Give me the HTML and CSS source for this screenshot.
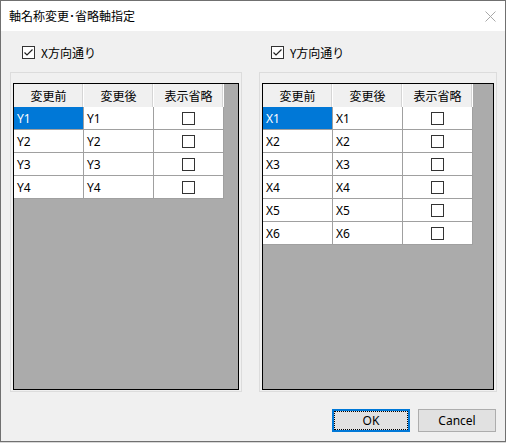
FILE: index.html
```html
<!DOCTYPE html>
<html lang="ja">
<head>
<meta charset="utf-8">
<title>軸名称変更･省略軸指定</title>
<link rel="stylesheet" href="styles.css">
</head>
<body>
<div class="window">
  <div class="titlebar">
    <span class="title">軸名称変更･省略軸指定</span>
    <svg class="close" width="11" height="11" viewBox="0 0 11 11"><path d="M0.5 0.5 L10.5 10.5 M10.5 0.5 L0.5 10.5" stroke="#a8a8a8" stroke-width="1" fill="none"/></svg>
  </div>
  <div class="body">
    <div class="cols checks">
      <label class="check">
        <svg class="cb" width="13" height="13" viewBox="0 0 13 13"><rect x="0.5" y="0.5" width="12" height="12" fill="#fff" stroke="#333"/><path d="M2.5 6.5 L5 9 L10.5 3.5" stroke="#222" stroke-width="1.2" fill="none"/></svg>
        <span>X方向通り</span>
      </label>
      <label class="check">
        <svg class="cb" width="13" height="13" viewBox="0 0 13 13"><rect x="0.5" y="0.5" width="12" height="12" fill="#fff" stroke="#333"/><path d="M2.5 6.5 L5 9 L10.5 3.5" stroke="#222" stroke-width="1.2" fill="none"/></svg>
        <span>Y方向通り</span>
      </label>
    </div>
    <div class="cols panels">
      <div class="panel">
        <div class="grid">
          <div class="table">
            <div class="hd">変更前</div><div class="hd">変更後</div><div class="hd">表示省略</div>
            <div class="cell sel">Y1</div><div class="cell">Y1</div><div class="cell cbc"><span class="box"></span></div>
            <div class="cell">Y2</div><div class="cell">Y2</div><div class="cell cbc"><span class="box"></span></div>
            <div class="cell">Y3</div><div class="cell">Y3</div><div class="cell cbc"><span class="box"></span></div>
            <div class="cell">Y4</div><div class="cell">Y4</div><div class="cell cbc"><span class="box"></span></div>
          </div>
        </div>
      </div>
      <div class="panel">
        <div class="grid">
          <div class="table">
            <div class="hd">変更前</div><div class="hd">変更後</div><div class="hd">表示省略</div>
            <div class="cell sel">X1</div><div class="cell">X1</div><div class="cell cbc"><span class="box"></span></div>
            <div class="cell">X2</div><div class="cell">X2</div><div class="cell cbc"><span class="box"></span></div>
            <div class="cell">X3</div><div class="cell">X3</div><div class="cell cbc"><span class="box"></span></div>
            <div class="cell">X4</div><div class="cell">X4</div><div class="cell cbc"><span class="box"></span></div>
            <div class="cell">X5</div><div class="cell">X5</div><div class="cell cbc"><span class="box"></span></div>
            <div class="cell">X6</div><div class="cell">X6</div><div class="cell cbc"><span class="box"></span></div>
          </div>
        </div>
      </div>
    </div>
    <div class="buttons">
      <button class="btn ok">OK</button>
      <button class="btn">Cancel</button>
    </div>
  </div>
</div>
</body>
</html>
```
FILE: styles.css
```css
html, body {
  margin: 0;
  padding: 0;
  background: #d8d8d8;
}
body {
  font-family: "Noto Sans", "Noto Sans CJK JP", sans-serif;
  font-size: 12px;
  color: #000;
}
.window {
  box-sizing: border-box;
  width: 506px;
  height: 442px;
  border: 1px solid #707070;
  display: flex;
  flex-direction: column;
}
.titlebar {
  height: 30px;
  background: #fff;
  display: flex;
  align-items: center;
  padding-left: 8px;
  padding-right: 9px;
}
.title {
  font-family: "Noto Sans CJK JP", sans-serif;
  font-size: 12px;
  line-height: 14px;
}
.close {
  margin-left: auto;
  margin-top: 1px;
}
.body {
  flex: 1;
  background: #f0f0f0;
  padding: 15px 8px 0 9px;
}
.cols {
  display: grid;
  grid-template-columns: 232px 238px;
  column-gap: 17px;
}
.checks {
  height: 13px;
}
.check {
  display: flex;
  align-items: center;
  margin-left: 12px;
  height: 13px;
}
.check .cb {
  display: block;
  flex: none;
}
.check span {
  margin-left: 6px;
  font-family: "Noto Sans CJK JP", sans-serif;
  line-height: 13px;
}
.panels {
  margin-top: 13px;
  height: 320px;
}
.panel {
  box-sizing: border-box;
  border: 1px solid #dcdcdc;
  padding: 10px 2px 1px 2px;
  display: flex;
}
.grid {
  flex: 1;
  border: 1px solid #000;
  background: #ababab;
}
.table {
  display: grid;
  grid-template-columns: 70px 70px 70px;
  grid-auto-rows: 23px;
  width: 210px;
}
.hd {
  background: #f0f0f0;
  border-right: 1px solid #fff;
  box-shadow: inset -1px 0 0 #d5d5d5;
  display: flex;
  align-items: center;
  justify-content: center;
  font-family: "Noto Sans CJK JP", sans-serif;
}
.cell {
  background: #fff;
  border-right: 1px solid #a0a0a0;
  border-bottom: 1px solid #a0a0a0;
  display: flex;
  align-items: center;
  padding-left: 3px;
}
.cell.sel {
  background: #0078d7;
  color: #fff;
}
.cbc {
  justify-content: center;
  padding-left: 0;
}
.box {
  box-sizing: border-box;
  width: 13px;
  height: 13px;
  border: 1px solid #333;
  background: #fff;
}
.buttons {
  display: flex;
  justify-content: flex-end;
  gap: 8px;
  margin-top: 17px;
  padding-right: 1px;
}
.btn {
  box-sizing: border-box;
  width: 78px;
  height: 23px;
  margin: 0;
  background: #e1e1e1;
  border: 1px solid #adadad;
  font-family: "Noto Sans", sans-serif;
  font-size: 12px;
  color: #000;
  padding: 0;
}
.btn.ok {
  border: 2px solid #0078d7;
  outline: 1px dotted #000;
  outline-offset: -3px;
}
```
